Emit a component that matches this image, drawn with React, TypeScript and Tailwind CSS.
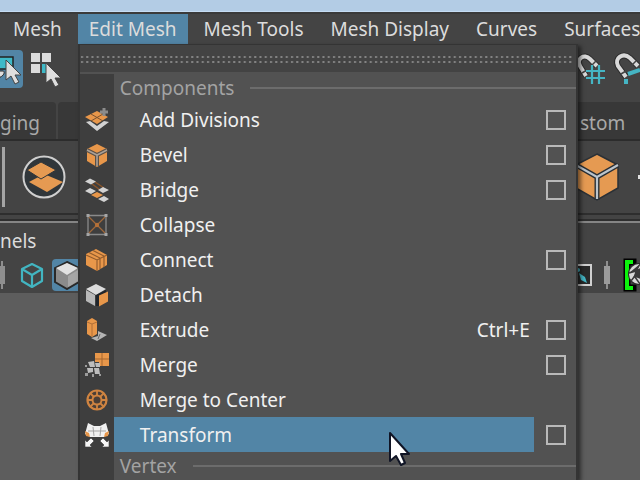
import React from "react";
import clsx from "clsx";

/* ── Menu icons ──────────────────────────────────────────────────── */

const ORANGE = "#e8974a";
const SILVER = "#d2d2d2";

function Icon({ children }: { children: React.ReactNode }) {
  return (
    <svg viewBox="0 0 24 24" className="h-6 w-6" aria-hidden="true">
      {children}
    </svg>
  );
}

function AddDivisionsIcon() {
  return (
    <Icon>
      <path d="M1 14l4-1 7 5 7-5 5 1-12 9z" fill={SILVER} />
      <path d="M12 3l11 6-11 7L0 9z" fill={ORANGE} />
      <path d="M6 6l12 7M18 6L6 13" stroke="#7a5230" strokeWidth="1" />
      <path d="M19 0v8M15 4h8" stroke="#8b8b8b" strokeWidth="3" />
    </Icon>
  );
}

function BevelIcon() {
  return (
    <Icon>
      <path d="M12 1l10 5v12l-10 6L2 18V6z" fill={ORANGE} />
      <path d="M2 7l10 5 10-5M12 12v11" stroke="#5a5047" strokeWidth="4" fill="none" />
      <path d="M2 7l10 5 10-5M12 12v11" stroke="#aaa096" strokeWidth="1.600" fill="none" />
    </Icon>
  );
}

function BridgeIcon() {
  return (
    <Icon>
      <path d="M10 4l9 6M7 6l11 8" stroke="#8c5528" strokeWidth="1.400" />
      <path d="M0 3.500l5-3 6 3-5 3zM0 13l5-3 6 3-5 3zM13 12l5-3 6 3-6 3zM13 21l6-3 5 3-5 3z" fill={SILVER} />
      <path d="M6 17l6-3 6 3-6 3z" fill={ORANGE} />
    </Icon>
  );
}

function CollapseIcon() {
  return (
    <Icon>
      <path d="M3 2.500h18v19H3z" fill="none" stroke="#8a8a8a" strokeWidth="1.300" />
      <path d="M4 4l16 16M20 4L4 20" stroke="#a0683a" strokeWidth="1.300" />
      <circle cx="12" cy="12" r="2.200" fill="#b57038" />
      <path d="M1.500 1h3v3h-3zM19.500 1h3v3h-3zM1.500 20h3v3h-3zM19.500 20h3v3h-3z" fill="#a6a6a6" />
    </Icon>
  );
}

function ConnectIcon() {
  return (
    <Icon>
      <path d="M11 1l11 6v10l-10 6-11-6V6z" fill={ORANGE} />
      <path
        d="M1 7l11 5 10-5M12 12v11M4 4.500l11 5.500v11M8 2.500L19 8v11"
        stroke="#8f5a2c"
        strokeWidth="1.100"
        fill="none"
      />
    </Icon>
  );
}

function DetachIcon() {
  return (
    <Icon>
      <path d="M11 1l10 5-10 6L1 6z" fill="#dcdcdc" />
      <path d="M1 7l9 5v11l-9-5z" fill="#b9b9b9" />
      <path d="M11 12l10-5v4l-6 3v9h-4z" fill="#20252b" />
      <path d="M14 12.500l9-4v10l-9 5z" fill={ORANGE} />
    </Icon>
  );
}

function ExtrudeIcon() {
  return (
    <Icon>
      <path d="M2 3l5-3 5 3v13l-5 3-5-3z" fill={ORANGE} />
      <path d="M2 4l5 2 5-2M7 6v12" stroke="#b06f37" strokeWidth="1" fill="none" />
      <path d="M13 13l9 4-10 6-6-3 7-2z" fill="#b4b4b4" />
      <path d="M15 16l-2 5" stroke="#666" />
    </Icon>
  );
}

function MergeIcon() {
  return (
    <Icon>
      <path d="M10 0h14v13H14v-4h-4z" fill={ORANGE} />
      <path d="M17 0v13M10 6h14" stroke="#a5662f" strokeWidth="1" />
      <path d="M3 9l6-1 1 6-5 0zM10 10h5v4h-4zM2 15l6 0 0 4-5 1zM9 15l5 0 1 6-5 0z" fill="#bdbdbd" />
      <path d="M0 12h2v2H0zM0 20h3v3H0zM7 21h2v3H7zM14 21h2v2h-2z" fill="#9c9c9c" />
    </Icon>
  );
}

function MergeCenterIcon() {
  return (
    <Icon>
      <circle cx="12" cy="12" r="9.500" fill="#4a3f37" stroke="#cf8441" strokeWidth="2.200" />
      <circle cx="12" cy="12" r="4.500" fill="none" stroke="#cf8441" strokeWidth="2" />
      <path
        d="M12 2v6M12 16v6M2 12h6M16 12h6M5 5l4 4M15 15l4 4M19 5l-4 4M9 15l-4 4"
        stroke="#cf8441"
        strokeWidth="1.800"
      />
    </Icon>
  );
}

function TransformIcon() {
  return (
    <Icon>
      <path d="M3 0l6 3h6l6-3 3 11-5 3H5l-5-3z" fill="#f1f1f1" />
      <path d="M0 8l4 2 1 4-4-1zM24 8l-4 2-1 4 4-1z" fill={ORANGE} />
      <path d="M8 4l1 9M16 4l-1 9M3 8h18" stroke="#a5a5a5" strokeWidth="1" />
      <path d="M0 24v-7l2 2 4-4 3 3-4 4 2 2zM24 24v-7l-2 2-4-4-3 3 4 4-2 2z" fill="#f7f7f7" stroke="#3e3e3e" strokeWidth="0.600" />
    </Icon>
  );
}

/* ── Menu data ───────────────────────────────────────────────────── */

const MENUS = ["Mesh", "Edit Mesh", "Mesh Tools", "Mesh Display", "Curves", "Surfaces"];

type MenuEntry = {
  label: string;
  icon: React.ComponentType;
  options?: boolean;
  shortcut?: string;
  active?: boolean;
};

const COMPONENT_ITEMS: MenuEntry[] = [
  { label: "Add Divisions", icon: AddDivisionsIcon, options: true },
  { label: "Bevel", icon: BevelIcon, options: true },
  { label: "Bridge", icon: BridgeIcon, options: true },
  { label: "Collapse", icon: CollapseIcon },
  { label: "Connect", icon: ConnectIcon, options: true },
  { label: "Detach", icon: DetachIcon },
  { label: "Extrude", icon: ExtrudeIcon, options: true, shortcut: "Ctrl+E" },
  { label: "Merge", icon: MergeIcon, options: true },
  { label: "Merge to Center", icon: MergeCenterIcon },
  { label: "Transform", icon: TransformIcon, options: true, active: true },
];

/* ── Drop-down ───────────────────────────────────────────────────── */

function SectionHeader({ title }: { title: string }) {
  return (
    <div className="flex h-7">
      <div className="w-[34px] shrink-0 bg-[#3e3e3e]" />
      <div className="flex flex-1 items-center gap-4 pl-1.5">
        <span className="text-[#a3a3a3]">{title}</span>
        <span className="h-0.5 flex-1 bg-[#6c6c6c]" />
      </div>
    </div>
  );
}

function MenuRow({ item }: { item: MenuEntry }) {
  return (
    <li className="relative flex h-[35px]">
      <span className="flex w-[34px] shrink-0 items-center justify-center bg-[#3e3e3e]">
        <item.icon />
      </span>
      <button
        type="button"
        className={clsx(
          "flex flex-1 items-center justify-between pr-1 pl-[26px] text-[#f0f0f0]",
          item.active && "bg-[#5285a6]"
        )}
      >
        <span>{item.label}</span>
        {item.shortcut && <span>{item.shortcut}</span>}
      </button>
      <span className="flex w-[42px] items-center pl-3">
        {item.options && (
          <input
            type="checkbox"
            aria-label={`${item.label} options`}
            className="h-5 w-5 appearance-none border-2 border-[#b9b9b9]"
          />
        )}
      </span>
      {item.active && (
        <svg viewBox="0 0 24 36" className="absolute top-3.5 left-[308px] h-9 w-6" aria-hidden="true">
          <path
            d="M2 2v28l6-5 5 9 4-2-4-9h8z"
            fill="#fff"
            stroke="#101526"
            strokeWidth="2"
            strokeLinejoin="round"
          />
        </svg>
      )}
    </li>
  );
}

function EditMeshMenu() {
  return (
    <div className="absolute top-full left-0 z-10 w-[500px] border-x-2 border-t border-[#343434] bg-[#525252] shadow-[3px_2px_4px_rgba(0,0,0,0.5)]">
      <div className="h-[27px] bg-[#434343] pt-2.5">
        <svg className="h-3 w-full" aria-hidden="true">
          <defs>
            <pattern id="grip" width="5.250" height="5" patternUnits="userSpaceOnUse">
              <rect x="1" y="1" width="2" height="2" fill="#858585" />
            </pattern>
          </defs>
          <rect width="492" height="10" fill="url(#grip)" />
        </svg>
      </div>
      <div className="h-0.5 bg-[#525252]" />
      <SectionHeader title="Components" />
      <ul>
        {COMPONENT_ITEMS.map((item) => (
          <MenuRow key={item.label} item={item} />
        ))}
      </ul>
      <SectionHeader title="Vertex" />
    </div>
  );
}

/* ── Toolbar icons ───────────────────────────────────────────────── */

function PointerShape() {
  return <path d="M0 0v20l5-4 4 8 4-2-4-7h6z" fill="#dedede" stroke="#444" strokeWidth="1" />;
}

function MagnetGridIcon() {
  return (
    <svg viewBox="0 0 30 36" className="h-9 w-[30px]" aria-hidden="true">
      <path d="M19 16l-7-7C6 3-2 9 2 16l6 10" fill="none" stroke="#2c2c2c" strokeWidth="6" />
      <path d="M19 16l-7-7C6 3-2 9 2 16l6 10" fill="none" stroke="#d9d9d9" strokeWidth="4" />
      <path d="M14 15l4-4M4 23l5-3" stroke="#444" strokeWidth="1.500" />
      <path d="M14 15v19M21 15v19M8 21h19M8 28h19" stroke="#45b5c4" strokeWidth="2.200" />
    </svg>
  );
}

function MagnetCurveIcon() {
  return (
    <svg viewBox="0 0 26 36" className="h-9 w-[26px]" aria-hidden="true">
      <path d="M24 16l-8-8C9 2 0 8 4 16l8 11" fill="none" stroke="#2c2c2c" strokeWidth="6" />
      <path d="M24 16l-8-8C9 2 0 8 4 16l8 11" fill="none" stroke="#d9d9d9" strokeWidth="4" />
      <path d="M18 15l4-4M7 24l5-3" stroke="#444" strokeWidth="1.500" />
      <path d="M14 24l12-4M12 29v5" stroke="#45b5c4" strokeWidth="4" />
    </svg>
  );
}

/* ── Page ────────────────────────────────────────────────────────── */

export default function App() {
  return (
    <div className="flex h-screen flex-col overflow-hidden bg-[#5d5d5d] font-['Noto_Sans',sans-serif] text-[19px] leading-6 text-[#dcdcdc]">
      <div className="h-3 shrink-0 border-b border-[#c5dcf3] bg-[#b3cce5]" />

      {/* Menu bar */}
      <nav className="flex h-8 shrink-0 gap-[5px] border-t-2 border-[#3a3a3a] bg-[#444444] pl-0.5 whitespace-nowrap">
        {MENUS.map((name) => (
          <div key={name} className="relative flex">
            <button
              type="button"
              className={clsx("px-[11px]", name === "Edit Mesh" && "bg-[#5285a6]")}
            >
              {name}
            </button>
            {name === "Edit Mesh" && <EditMeshMenu />}
          </div>
        ))}
      </nav>

      {/* Status line */}
      <div className="flex h-[58px] shrink-0 items-start justify-between bg-[#444444] pt-1.5">
        <div className="flex gap-2">
          <button type="button" aria-label="Select by object" className="h-[38px] w-[23px] rounded-r bg-[#5285a6]">
            <svg viewBox="0 0 23 38" className="h-[38px] w-[23px]" aria-hidden="true">
              <path d="M-2 7h15v12H-2z" fill="#3fb9c7" stroke="#222" strokeWidth="1.500" />
              <path d="M-2 21h5c2 0 2 5-5 7z" fill="#dedede" stroke="#222" />
              <g transform="translate(6 10)">
                <PointerShape />
              </g>
            </svg>
          </button>
          <button type="button" aria-label="Select by component" className="h-[38px] w-[30px]">
            <svg viewBox="0 0 30 38" className="h-[38px] w-[30px]" aria-hidden="true">
              <path d="M0 3h9v9H0zM11 3h9v9h-9zM0 14h9v9H0z" fill="#dcdcdc" />
              <path d="M11 14h6v9h-6z" fill="#3fb9c7" />
              <g transform="translate(15 13)">
                <PointerShape />
              </g>
            </svg>
          </button>
        </div>
        <div className="flex gap-1.5">
          <button type="button" aria-label="Snap to grids">
            <MagnetGridIcon />
          </button>
          <button type="button" aria-label="Snap to curves">
            <MagnetCurveIcon />
          </button>
        </div>
      </div>

      {/* Shelf tabs */}
      <div className="flex h-[39px] shrink-0 justify-between border-b-2 border-[#2c2c2c] bg-[#444444] text-[#a9a9a9]">
        <div className="flex gap-0.5">
          <button type="button" className="w-14 rounded-tr bg-[#383838] pt-1 text-left">
            ging
          </button>
          <button type="button" aria-label="Shelf" className="w-20 rounded-tl bg-[#383838]" />
        </div>
        <button type="button" className="w-[62px] bg-[#383838] pt-1 pl-0.5 text-left">
          stom
        </button>
      </div>

      {/* Shelf */}
      <div className="flex h-[72px] shrink-0 items-center justify-between bg-[#444444]">
        <div className="flex items-center gap-[17px]">
          <span className="ml-0.5 h-[60px] w-[3px] bg-[#a5a5a5]" />
          <button type="button" aria-label="Layers">
            <svg viewBox="0 0 44 44" className="h-11 w-11" aria-hidden="true">
              <circle cx="22" cy="22" r="20.500" fill="#30363a" stroke="#cfcfcf" strokeWidth="2" />
              <path d="M7 27l15-8 19 8-16 10z" fill="#e59a52" />
              <path d="M5 15l14-8 15 8-15 9z" fill="#e59a52" stroke="#30363a" strokeWidth="1" />
            </svg>
          </button>
        </div>
        <div className="flex items-center gap-[19px]">
          <button type="button" aria-label="Cube">
            <svg viewBox="0 0 41 48" className="h-12 w-[41px]" aria-hidden="true">
              <path d="M19 1l21 11v23L19 47-2 35V12z" fill="#e59a52" stroke="#2a3036" strokeWidth="1.500" />
              <path d="M-2 12l21 12 21-12M19 24v23" fill="none" stroke="#2a3036" strokeWidth="5" />
              <path d="M-2 12l21 12 21-12M19 24v22" fill="none" stroke="#bcc5cc" strokeWidth="2.200" />
            </svg>
          </button>
          <span className="h-1 w-0.5 bg-[#e0e0e0]" />
        </div>
      </div>
      <div className="h-2 shrink-0 border-y-2 border-[#2e2e2e] bg-[#444444]" />

      {/* Panel menu and view icons */}
      <div className="flex h-[72px] shrink-0 flex-col justify-between bg-[#444444] pb-0.5">
        <div className="border-t-2 border-[#858585] pt-1.5">
          <button type="button" className="block">
            nels
          </button>
        </div>
        <div className="flex h-8 items-center justify-between">
          <div className="flex items-center gap-3.5">
            <svg viewBox="0 0 6 28" className="h-7 w-1.5" aria-hidden="true">
              <path d="M1 0h2v28H1z" fill="#8f8f8f" />
              <path d="M0 5h5v18H0z" fill="#8f8f8f" />
            </svg>
            <button type="button" aria-label="Wireframe">
              <svg viewBox="0 0 24 28" className="h-7 w-6" aria-hidden="true">
                <path
                  d="M12 3l10 5v12l-10 6-10-6V8zM2 8l10 6 10-6M12 14v12"
                  fill="none"
                  stroke="#42b5c1"
                  strokeWidth="2.200"
                  strokeLinejoin="round"
                />
              </svg>
            </button>
            <button type="button" aria-label="Shaded" className="-ml-1.5 h-8 w-8 rounded-l bg-[#5285a6] pl-0.5">
              <svg viewBox="0 0 26 30" className="h-[30px] w-[26px]" aria-hidden="true">
                <path d="M13 2l12 6v14l-12 7-12-7V8z" fill="#8b8b8b" stroke="#292929" strokeWidth="2" />
                <path d="M13 3l11 5-11 7L2 8z" fill="#e2e2e2" />
                <path d="M14 16l10-6v11l-10 6z" fill="#a6a6a6" />
              </svg>
            </button>
          </div>
          <div className="flex items-center gap-3">
            <button type="button" aria-label="Isolate select">
              <svg viewBox="0 0 15 24" className="h-6 w-[15px]" aria-hidden="true">
                <path d="M-3 2h17v20H-3z" fill="#292929" stroke="#d0d0d0" strokeWidth="2" />
                <path d="M2 10l6 4 2 6-6-3z" fill="#45b5c4" />
                <circle cx="1" cy="7" r="2" fill="#45b5c4" />
              </svg>
            </button>
            <svg viewBox="0 0 6 28" className="h-7 w-1.5" aria-hidden="true">
              <path d="M2 0h2v28H2z" fill="#8f8f8f" />
              <path d="M0 5h6v18H0z" fill="#9b9b9b" />
            </svg>
            <button type="button" aria-label="Exposure">
              <svg viewBox="0 0 18 34" className="h-[34px] w-[18px]" aria-hidden="true">
                <path d="M11 4H5v26h6" fill="none" stroke="#000" strokeWidth="7" strokeLinecap="square" />
                <path d="M11 4H5v26h6" fill="none" stroke="#0cf30c" strokeWidth="4" />
                <circle cx="17" cy="16" r="11" fill="#2b2b2b" />
                <circle cx="17" cy="16" r="10" fill="#d8d8d8" />
                <path
                  d="M7 15l7-2 4-7M9 23l4-5 2-6M18 26l-5-7M14 13l4-2v9l-5-2z"
                  fill="#3a3a3a"
                  stroke="#3a3a3a"
                  strokeWidth="1.500"
                />
              </svg>
            </button>
          </div>
        </div>
      </div>
    </div>
  );
}
